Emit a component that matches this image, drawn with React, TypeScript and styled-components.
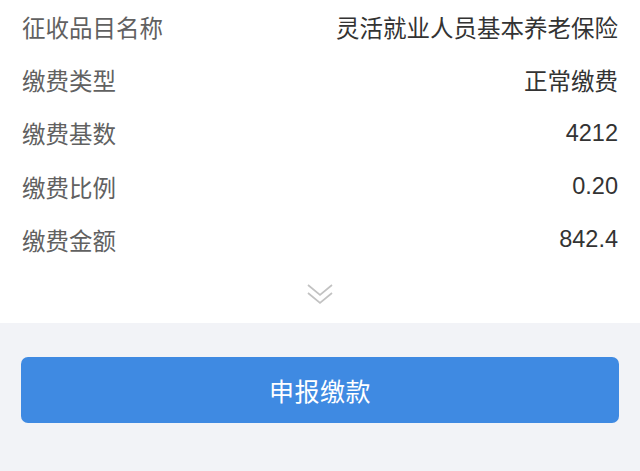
import React from "react";
import styled, { createGlobalStyle } from "styled-components";

const GlobalStyle = createGlobalStyle`
  html, body {
    margin: 0;
    padding: 0;
    background: #f2f3f7;
  }
  body {
    font-family: "Liberation Sans", "Noto Sans CJK SC", sans-serif;
  }
`;

interface Item {
  label: string;
  value: string;
}

const items: Item[] = [
  { label: "征收品目名称", value: "灵活就业人员基本养老保险" },
  { label: "缴费类型", value: "正常缴费" },
  { label: "缴费基数", value: "4212" },
  { label: "缴费比例", value: "0.20" },
  { label: "缴费金额", value: "842.4" },
];

const Page = styled.div`
  width: 640px;
  height: 471px;
  background: #f2f3f7;
  display: flex;
  flex-direction: column;
`;

const InfoPanel = styled.div`
  background: #ffffff;
  height: 323px;
  display: flex;
  flex-direction: column;
  padding: 0 22px 0 22px;
  box-sizing: border-box;
`;

const Row = styled.div`
  height: 53.3px;
  display: flex;
  align-items: center;
  justify-content: space-between;
  font-size: 23.5px;
`;

const Label = styled.span`
  color: #616161;
`;

const Value = styled.span`
  color: #333333;
`;

const MoreToggle = styled.div`
  flex: 1;
  display: flex;
  justify-content: center;
  align-items: center;
  padding-bottom: 2px;
`;

const Footer = styled.div`
  padding: 34px 21px 0 21px;
`;

const SubmitButton = styled.button`
  width: 100%;
  height: 66px;
  border: none;
  border-radius: 7px;
  background: #3f8ae2;
  color: #ffffff;
  font-family: "Liberation Sans", "Noto Sans CJK SC", sans-serif;
  font-size: 25px;
  letter-spacing: 0.5px;
  cursor: pointer;
`;

const DoubleChevron = () => (
  <svg width="28" height="24" viewBox="0 0 28 24" fill="none">
    <path d="M2 3 L14 13 L26 3" stroke="#c2c2c2" strokeWidth="1.7" />
    <path d="M2 11 L14 21 L26 11" stroke="#c2c2c2" strokeWidth="1.7" />
  </svg>
);

export default function App() {
  return (
    <Page>
      <GlobalStyle />
      <InfoPanel>
        {items.map((item) => (
          <Row key={item.label}>
            <Label>{item.label}</Label>
            <Value>{item.value}</Value>
          </Row>
        ))}
        <MoreToggle>
          <DoubleChevron />
        </MoreToggle>
      </InfoPanel>
      <Footer>
        <SubmitButton>申报缴款</SubmitButton>
      </Footer>
    </Page>
  );
}
